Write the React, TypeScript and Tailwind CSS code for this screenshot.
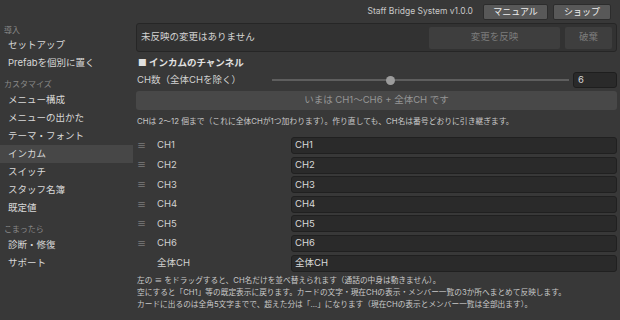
import React from "react"

const font = { fontFamily: '"Inter", "Noto Sans CJK JP", sans-serif' }

const groups = [
  { title: "導入", items: ["セットアップ", "Prefabを個別に置く"] },
  { title: "カスタマイズ", items: ["メニュー構成", "メニューの出かた", "テーマ・フォント", "インカム", "スイッチ", "スタッフ名簿", "既定値"] },
  { title: "こまったら", items: ["診断・修復", "サポート"] },
]

const channels = ["CH1", "CH2", "CH3", "CH4", "CH5", "CH6"]

function Sidebar() {
  return (
    <div className="w-[133px] shrink-0 flex flex-col">
      {groups.map((g, i) => (
        <div key={g.title} className={i === 0 ? "" : "mt-[5px]"}>
          <div className={`${i === 0 ? "h-[13px]" : "h-[14px]"} flex items-center pl-[4px] text-[8px] text-[#8a8a8a]`}>{g.title}</div>
          {g.items.map((item) => (
            <div
              key={item}
              className={`h-[18px] flex items-center pl-[8px] text-[9.5px] text-[#d8d8d8] ${item === "インカム" ? "bg-[#474747]" : ""}`}
            >
              {item}
            </div>
          ))}
        </div>
      ))}
    </div>
  )
}

function ChannelRow({ label, drag }: { label: string; drag: boolean }) {
  return (
    <div className="h-[17px] flex items-center">
      <div className="w-[21px] pl-[1px] text-[9px] text-[#9a9a9a]">{drag ? "≡" : ""}</div>
      <div className="w-[134px] text-[9.5px] text-[#d2d2d2]">{label}</div>
      <div className="flex-1 h-full flex items-center px-[3px] bg-[#2a2a2a] border border-[#202020] rounded-[3px] text-[9.5px] text-[#dadada]">
        {label}
      </div>
    </div>
  )
}

export default function App() {
  return (
    <div className="w-[620px] h-[320px] bg-[#383838] flex flex-col overflow-hidden" style={font}>
      <div className="h-[23px] flex items-center justify-end pr-[9px] shrink-0">
        <span className="text-[8.5px] text-[#c8c8c8] mr-[10px]">Staff Bridge System v1.0.0</span>
        <button className="w-[65px] h-[16px] bg-[#585858] border border-[#2c2c2c] rounded-[2px] text-[9px] text-[#eeeeee] mr-[5px]">マニュアル</button>
        <button className="w-[58px] h-[16px] bg-[#585858] border border-[#2c2c2c] rounded-[2px] text-[9px] text-[#eeeeee]">ショップ</button>
      </div>
      <div className="flex flex-1">
        <Sidebar />
        <div className="flex-1 flex flex-col pl-[3px] pr-[3px]">
          <div className="h-[29px] flex items-center bg-[#323232] border border-[#262626] rounded-[3px] pl-[4px] pr-[4px]">
            <span className="flex-1 text-[9.5px] text-[#d2d2d2]">未反映の変更はありません</span>
            <button className="w-[131px] h-[22px] bg-[#3e3e3e] rounded-[2px] text-[9.5px] text-[#7c7c7c] mr-[5px]">変更を反映</button>
            <button className="w-[47px] h-[22px] bg-[#3e3e3e] rounded-[2px] text-[9.5px] text-[#7c7c7c]">破棄</button>
          </div>
          <div className="mt-[3px] h-[16px] flex items-center pl-[2px] text-[9.5px] font-bold text-[#e0e0e0]">■ インカムのチャンネル</div>
          <div className="h-[18px] flex items-center">
            <span className="w-[136px] pl-[1px] text-[9.5px] text-[#d2d2d2]">CH数（全体CHを除く）</span>
            <div className="relative w-[297px] h-[9px] flex items-center">
              <div className="w-full h-[2px] bg-[#5e5e5e]" />
              <div className="absolute left-[114px] w-[9px] h-[9px] rounded-full bg-[#9c9c9c]" />
            </div>
            <div className="ml-[4px] flex-1 h-[16px] flex items-center px-[4px] bg-[#2a2a2a] border border-[#1e1e1e] rounded-[3px] text-[9.5px] text-[#dadada]">6</div>
          </div>
          <div className="mt-[2px] h-[19px] flex items-center justify-center bg-[#484848] rounded-[3px] text-[9.5px] text-[#969696]">
            いまは CH1〜CH6 + 全体CH です
          </div>
          <div className="mt-[4px] h-[16px] flex items-center pl-[1px] text-[7.8px] text-[#c8c8c8]">
            CHは 2〜12 個まで（これに全体CHが1つ加わります）。作り直しても、CH名は番号どおりに引き継ぎます。
          </div>
          <div className="mt-[7px] flex flex-col gap-[2.6px]">
            {channels.map((c) => (
              <ChannelRow key={c} label={c} drag />
            ))}
            <ChannelRow label="全体CH" drag={false} />
          </div>
          <div className="mt-[3px] flex flex-col text-[7.7px] leading-[12px] text-[#c8c8c8] pl-[1px]">
            <span>左の ≡ をドラッグすると、CH名だけを並べ替えられます（通話の中身は動きません）。</span>
            <span>空にすると「CH1」等の既定表示に戻ります。カードの文字・現在CHの表示・メンバー一覧の3か所へまとめて反映します。</span>
            <span>カードに出るのは全角5文字までで、超えた分は「…」になります（現在CHの表示とメンバー一覧は全部出ます）。</span>
          </div>
        </div>
      </div>
    </div>
  )
}
